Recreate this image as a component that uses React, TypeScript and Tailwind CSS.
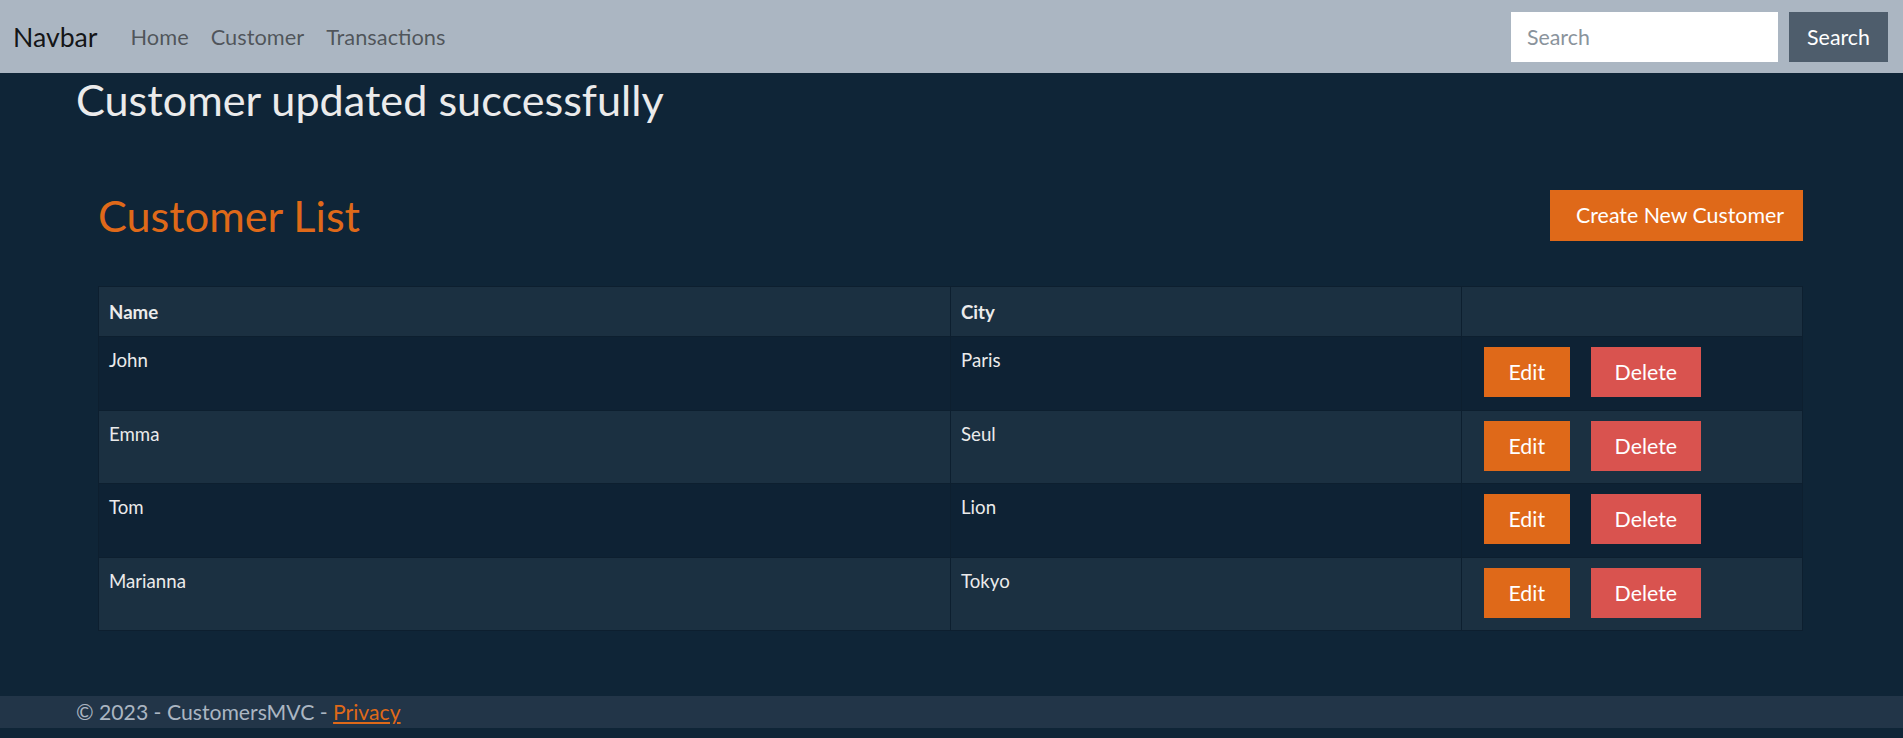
import React from "react";

const rows = [
  { name: "John", city: "Paris" },
  { name: "Emma", city: "Seul" },
  { name: "Tom", city: "Lion" },
  { name: "Marianna", city: "Tokyo" },
];

export default function App() {
  return (
    <div className="min-h-screen bg-[#0f2537] font-['Lato','Noto_Sans',sans-serif] text-[#ebebeb]">
      <nav className="h-[73px] bg-[#abb6c2] flex items-center pl-[13px] pr-[15px]">
        <span className="text-[26.67px] leading-[32px] text-black/90">Navbar</span>
        <ul className="flex ml-[22px]">
          {["Home", "Customer", "Transactions"].map((l) => (
            <li key={l}>
              <a className="block px-[11px] text-[21.8px] leading-[32px] text-black/55 cursor-pointer">{l}</a>
            </li>
          ))}
        </ul>
        <form className="ml-auto flex gap-[11px]">
          <input
            placeholder="Search"
            className="w-[267px] h-[50px] bg-white pl-[16px] text-[21.33px] text-[#333] placeholder:text-[#8a939c] outline-none"
          />
          <button type="button" className="w-[99px] h-[50px] bg-[#4e5d6c] text-white text-[21.33px] leading-[32px]">
            Search
          </button>
        </form>
      </nav>

      <main className="px-[76px]">
        <h1 className="text-[43.2px] leading-[52px] font-normal">Customer updated successfully</h1>
        <div className="ml-[22px] mr-[24px] mt-[65px]">
          <div className="flex justify-between items-start">
            <h2 className="text-[43.2px] leading-[51px] text-[#df6919]">Customer List</h2>
            <button className="h-[51px] bg-[#df6919] text-white text-[21.33px] leading-[31px] pl-[26px] pr-[19px] py-[10px]">
              Create New Customer
            </button>
          </div>
          <table className="mt-[45px] w-full border-collapse border border-[#0d1f2f] text-[18.67px]">
            <thead>
              <tr className="bg-[#1b3041]">
                <th className="w-[852px] text-left font-bold pl-[10px] pt-[11px] pb-[10px] leading-[28px] border border-[#0d1f2f]">Name</th>
                <th className="w-[511px] text-left font-bold pl-[10px] pt-[11px] pb-[10px] leading-[28px] border border-[#0d1f2f]">City</th>
                <th className="border border-[#0d1f2f]"></th>
              </tr>
            </thead>
            <tbody>
              {rows.map((r, i) => (
                <tr key={r.name} className={i % 2 === 1 ? "bg-[#1b3041]" : "bg-[#0e2234]"}>
                  <td className="align-top pl-[10px] pt-[11px] leading-[25px] border border-[#0d1f2f]">{r.name}</td>
                  <td className="align-top pl-[10px] pt-[11px] leading-[25px] border border-[#0d1f2f]">{r.city}</td>
                  <td className="align-top pl-[22px] pt-[10px] pb-[12.5px] border border-[#0d1f2f]">
                    <div className="flex gap-[21px] text-[21.33px]">
                      <button className="h-[50px] px-[24.5px] bg-[#df6919] text-white leading-[30px]">Edit</button>
                      <button className="h-[50px] px-[24px] bg-[#d9534f] text-white leading-[30px]">Delete</button>
                    </div>
                  </td>
                </tr>
              ))}
            </tbody>
          </table>
        </div>
      </main>

      <footer className="mt-[65px] h-[32px] bg-[#223548] px-[76px] text-[21.2px] leading-[32px] text-[#abb6c2]">
        © 2023 - CustomersMVC - <a className="text-[#df6919] underline cursor-pointer">Privacy</a>
      </footer>
    </div>
  );
}
